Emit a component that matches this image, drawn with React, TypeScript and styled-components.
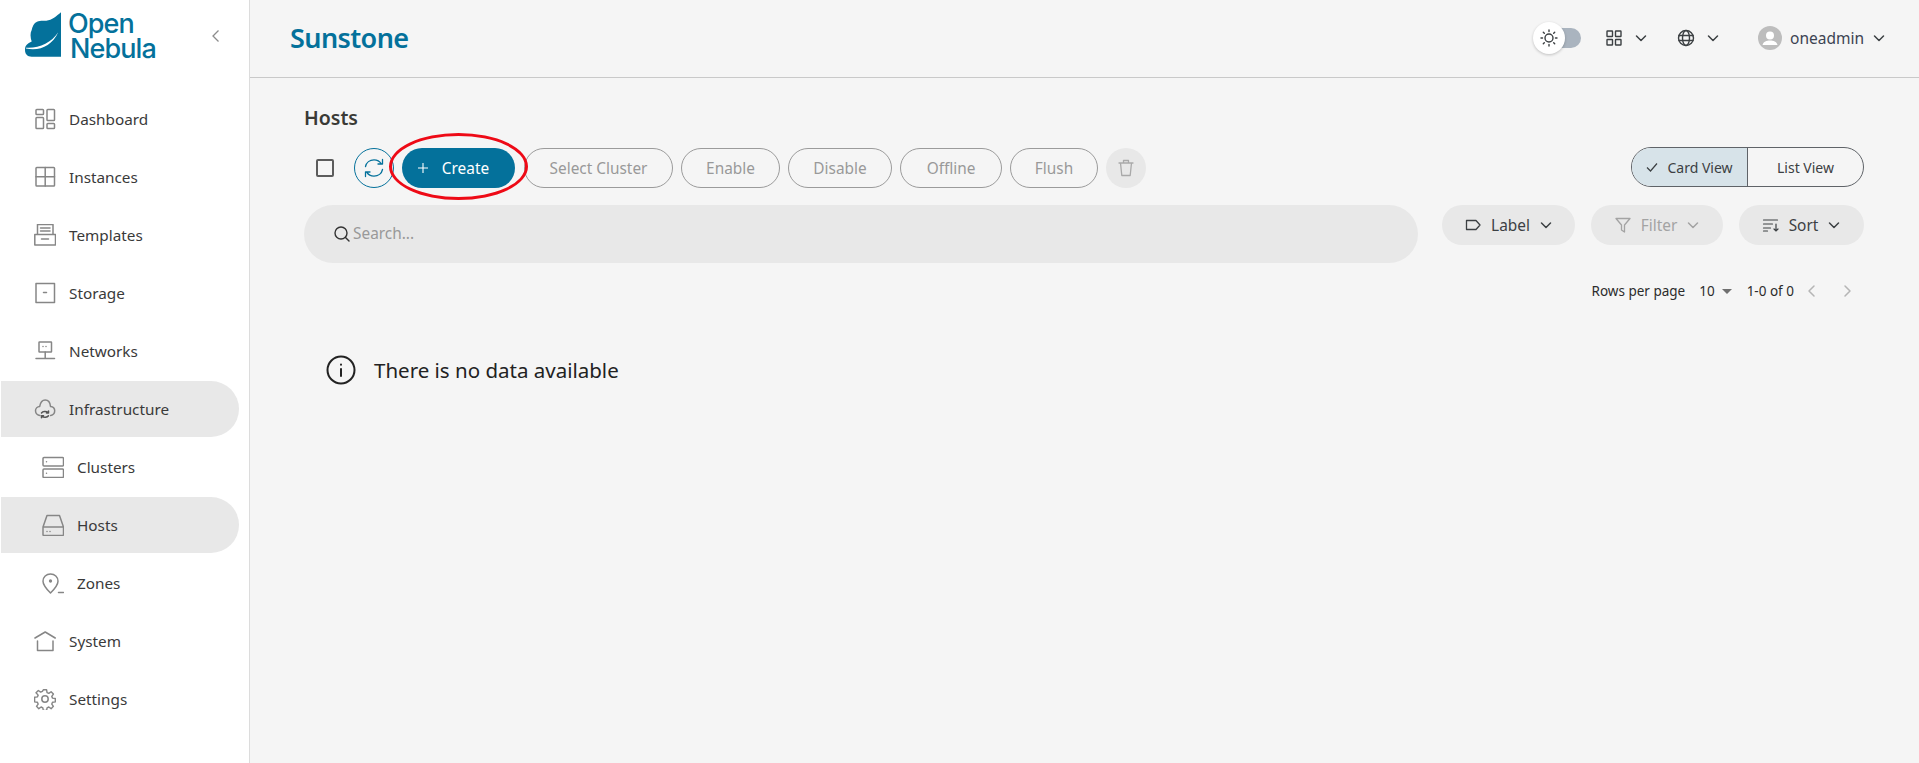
import React from "react";
import styled, { createGlobalStyle } from "styled-components";

const Global = createGlobalStyle`
  html, body { margin: 0; padding: 0; height: 100%; background: #f5f5f5; overflow: hidden; }
  #root { height: 100%; }
  * { box-sizing: border-box; }
  body { font-family: "Noto Sans", "Open Sans", sans-serif; color: #2c2c2c; }
`;

const Shell = styled.div`display: flex; height: 763px; width: 1919px;`;
const Sidebar = styled.aside`
  width: 250px; flex: none; background: #fff; border-right: 1px solid #dcdcdc;
  display: flex; flex-direction: column;
`;
const Brand = styled.div`
  height: 91px; flex: none; display: flex; align-items: flex-start; padding: 12px 0 0 25px; position: relative;
`;
const LogoWord = styled.div`
  margin: -1px 0 0 6px; font-family: "Inter", sans-serif; font-weight: 500; color: #04719b;
  font-size: 27px; line-height: 25px; letter-spacing: -0.9px;
`;
const LogoLine = styled.div<{ $indent?: number }>`padding-left: ${p => p.$indent ?? 0}px;`;
const Collapse = styled.button`
  border: 0; background: none; padding: 0; color: #8c8c8c; display: flex; margin: 17px 28px 0 auto;
`;
const Nav = styled.nav`display: flex; flex-direction: column; gap: 2px; padding: 0 10px 0 1px;`;
const NavItem = styled.a<{ $active?: boolean; $nested?: boolean }>`
  height: 56px; display: flex; align-items: center; gap: 13px;
  padding: 0 0 1px ${p => (p.$nested ? 41 : 33)}px;
  background: ${p => (p.$active ? "#e8e8e8" : "transparent")};
  border-radius: 0 28px 28px 0; font-size: 15.3px; color: #3a3a3a;
`;
const NavIcon = styled.svg`
  width: 22px; height: 22px; flex: none; fill: none; stroke: #868686; stroke-width: 1.5;
  stroke-linecap: round; stroke-linejoin: round;
`;

const Main = styled.main`flex: 1; min-width: 0; display: flex; flex-direction: column;`;
const Header = styled.header`
  height: 78px; flex: none; border-bottom: 1px solid #c9c9c9; display: flex; align-items: center;
  padding: 0 33px 2px 40px;
`;
const AppTitle = styled.h1`
  margin: 0; font-size: 27px; font-weight: 600; color: #04719b; letter-spacing: -0.6px;
`;
const HeaderTools = styled.div`margin-left: auto; display: flex; align-items: center;`;
const ToggleWrap = styled.div`position: relative; width: 48px; height: 20px; margin-right: 23px; display: flex; justify-content: flex-end;`;
const ToggleTrack = styled.div`width: 36px; height: 20px; border-radius: 10px; background: #aab4bf;`;
const ToggleThumb = styled.div`
  position: absolute; left: 0; top: -6px; width: 32px; height: 32px; border-radius: 50%; background: #fff;
  box-shadow: 0 1px 3px rgba(0,0,0,.22); display: flex; align-items: center; justify-content: center;
`;
const HeaderIcon = styled.svg`
  width: 20px; height: 20px; fill: none; stroke: #3c4043; stroke-width: 1.4; stroke-linecap: round; stroke-linejoin: round; flex: none;
`;
const HeaderGroup = styled.div<{ $gap: number; $after: number }>`
  display: flex; align-items: center; gap: ${p => p.$gap}px; margin-right: ${p => p.$after}px;
`;
const Chevron = styled.svg<{ $color?: string }>`
  width: 14px; height: 14px; fill: none; stroke: ${p => p.$color ?? "#3c4043"}; stroke-width: 1.5;
  stroke-linecap: round; stroke-linejoin: round; flex: none;
`;
const Avatar = styled.div`
  width: 24px; height: 24px; border-radius: 50%; background: #bdbdbd; display: flex; align-items: center; justify-content: center; overflow: hidden;
`;
const UserName = styled.span`font-size: 15.5px; color: #3c4352; width: 71px; margin-left: -2px; margin-right: 1px;`;

const Content = styled.div`flex: 1; padding: 27px 55px 0 54px; display: flex; flex-direction: column;`;
const PageTitle = styled.h2`margin: 0; font-size: 19.5px; line-height: 26px; font-weight: 600; color: #3a3a36; height: 43px;`;
const ActionRow = styled.div`display: flex; align-items: flex-start; height: 57px;`;
const CheckCell = styled.div`
  width: 18px; height: 18px; border: 2px solid #5c5c5c; border-radius: 2px; margin: 11px 20px 0 12px; flex: none;
`;
const Actions = styled.div`display: flex; gap: 8px; align-items: center;`;
const RefreshBtn = styled.button`
  width: 40px; height: 40px; border-radius: 50%; border: 1px solid #04719b; background: none; padding: 0;
  display: flex; align-items: center; justify-content: center;
`;
const CreateWrap = styled.div`position: relative; display: flex; margin-right: 1px;`;
const CreateBtn = styled.button`
  width: 113px; height: 40px; border-radius: 20px; border: 0; background: #04719b; color: #fff; font: inherit; font-size: 15.4px;
  display: flex; align-items: center; justify-content: center; gap: 13px; padding: 0 11px 0 0;
`;
const RedEllipse = styled.span`
  position: absolute; left: -13px; right: -13px; top: -15px; bottom: -12px; border: 3.5px solid #ee0a16; border-radius: 50%; pointer-events: none;
`;
const GhostBtn = styled.button<{ $w: number }>`
  width: ${p => p.$w}px; height: 40px; border-radius: 20px; border: 1px solid #9b9b9b; background: none; font: inherit; font-size: 15.4px;
  color: #999; padding: 0; white-space: nowrap;
`;
const TrashBtn = styled.button`
  width: 40px; height: 40px; border-radius: 50%; border: 0; background: #e8e8e8; padding: 0; display: flex; align-items: center; justify-content: center;
`;
const ViewSwitch = styled.div`
  margin-left: auto; margin-top: -1px; display: flex; width: 233px; height: 40px; border: 1px solid #5f6368; border-radius: 20px; overflow: hidden;
`;
const ViewOption = styled.div<{ $on?: boolean }>`
  flex: ${p => (p.$on ? "0 0 116px" : "1")}; display: flex; align-items: center; justify-content: center; gap: 9px;
  font-size: 14px; color: #3c4043; background: ${p => (p.$on ? "#d7e3e9" : "transparent")};
  border-right: ${p => (p.$on ? "1px solid #5f6368" : "0")};
`;
const FilterRow = styled.div`display: flex; align-items: flex-start; gap: 16px;`;
const SearchBox = styled.div`
  width: 1114px; height: 58px; border-radius: 29px; background: #e8e8e8; margin-right: 8px; display: flex; align-items: center; gap: 1px;
  padding: 0 0 1px 28px; font-size: 15.4px; color: #999; flex: none;
`;
const FilterBtn = styled.button<{ $w: number; $off?: boolean }>`
  width: ${p => p.$w}px; height: 40px; border-radius: 20px; border: 0; background: #e8e8e8; padding: 0; flex: none;
  display: flex; align-items: center; justify-content: center; gap: 9px; font: inherit; font-size: 15.4px;
  color: ${p => (p.$off ? "#a3a3a3" : "#3c4043")};
`;
const Pager = styled.div`
  display: flex; align-items: center; justify-content: flex-end; height: 20px; margin-top: 18px; padding-right: 10px; font-size: 13.5px; color: #2c2c2c;
`;
const PagerSize = styled.span`margin-left: 14px;`;
const Caret = styled.span`
  width: 0; height: 0; border: 5px solid transparent; border-top: 5px solid #6f6f6f; border-bottom: 0; margin: 0 15px 0 7px;
`;
const PagerNav = styled.span`display: flex; gap: 21px; margin-left: 11px;`;
const EmptyNote = styled.div`
  display: flex; align-items: center; gap: 18px; margin-top: 51px; padding-left: 22px; font-size: 20.5px; color: #222; height: 36px;
`;

const I = ({ children }: { children: React.ReactNode }) => <NavIcon viewBox="0 0 22 22">{children}</NavIcon>;
const navIcons: Record<string, React.ReactNode> = {
  Dashboard: <><rect x="2" y="1.500" width="7.500" height="5" rx=".8"/><rect x="2" y="9.500" width="7.500" height="11" rx=".8"/><rect x="13" y="1.500" width="7.500" height="11" rx=".8"/><rect x="13" y="15.500" width="7.500" height="5" rx=".8"/></>,
  Instances: <><rect x="2" y="1.500" width="18.500" height="18.500" rx=".8"/><path d="M11.200 1.500v18.500M2 10.700h18.500"/></>,
  Templates: <><path d="M3.500 10V.5h15.500V10M.8 10.500h20.700v10.500H.8zM6.500 4h9.500M6.500 7h9.500M7.500 15h7"/></>,
  Storage: <><path d="M2 1.500h18.500M2 1.500V20.500h18.500V1.500M9.500 10.500h3"/></>,
  Networks: <><rect x="5" y="2" width="12.500" height="10" rx=".5"/><path d="M11.200 12V18.500M2 18.500h18.500M9 6.500h.01M12 6.500h.01"/></>,
  Infrastructure: <><path d="M6 17.500c-2.500-.2-4.500-2.200-4.500-4.700 0-2.400 1.900-4.300 4.200-4.400C6.300 5 8.200 2 11.200 2c3.200 0 5 3 5.300 6.400 2.300.2 4.200 2 4.200 4.400 0 2.300-1.500 4.200-4 4.700"/><path d="M7.500 15c1.200-1.500 4.500-2.200 6.500-.3M14.500 13v2h-2M14.500 17.800c-1.200 1.500-4.500 2.200-6.500.3M7.500 19.800v-2h2" strokeWidth="1.500" stroke="#555"/></>,
  Clusters: <><rect x="1" y="1.500" width="20.500" height="8.500" rx="1"/><rect x="1" y="13" width="20.500" height="8.500" rx="1"/><path d="M4.500 5.700h.01M4.500 17.200h.01"/></>,
  Hosts: <><path d="M1 13 5 1.500h12.500l4 11.500M1 13h20.500v7.500a1 1 0 0 1-1 1H2a1 1 0 0 1-1-1zM5 17.500h.01M8 17.500h.01"/></>,
  Zones: <><path d="M8.500 21C5 17.500 1 13.500 1 9.200 1 5 4.300 2 8.500 2S16 5 16 9.200c0 4.300-4 8.300-7.500 11.800z"/><circle cx="8.500" cy="9" r=".9" fill="#868686"/><path d="M16.500 20.500h5"/></>,
  System: <><path d="M1 8 11.200 2l10 6M3.500 11v9.500h15.500V11"/></>,
  Settings: <><circle cx="11" cy="11" r="3.200"/><path d="M9.300 1.500h3.400l.5 2.900 1.800.8 2.400-1.700 2.400 2.400-1.700 2.400.8 1.800 2.900.5v3.400l-2.900.5-.8 1.800 1.700 2.400-2.400 2.400-2.400-1.700-1.800.8-.5 2.900H9.300l-.5-2.900-1.800-.8-2.400 1.700-2.400-2.400 1.700-2.400-.8-1.800-2.900-.5V9.300l2.900-.5.8-1.800L1.700 4.600l2.400-2.400L6.500 3.900l1.800-.8z" transform="translate(.4 .4) scale(.96)"/></>,
};
const navItems: { label: string; active?: boolean; nested?: boolean }[] = [
  { label: "Dashboard" }, { label: "Instances" }, { label: "Templates" }, { label: "Storage" }, { label: "Networks" },
  { label: "Infrastructure", active: true }, { label: "Clusters", nested: true }, { label: "Hosts", nested: true, active: true },
  { label: "Zones", nested: true }, { label: "System" }, { label: "Settings" },
];
const Down = ({ color }: { color?: string }) => <Chevron $color={color} viewBox="0 0 14 14"><path d="M2.500 5l4.500 4.500L11.500 5"/></Chevron>;

export default function App() {
  return (
    <Shell>
      <Global />
      <Sidebar>
        <Brand>
          <svg width="37" height="46" viewBox="0 0 37 46" style={{ flex: "none" }}>
            <path fill="#04719b" d="M36 .3V44.700H6.700C2.500 44.700 0 42 0 38c0-2.200.4-3.800 1.500-5 1.300-1.500 3.300-2.700 5.200-3.600C5.300 25.500 5 21 6.700 18c.6-3.500 2.300-7 5.300-8.300 3-1.400 6.300-.8 9.300-1C27 8.200 31.500 4 36 .3z"/>
            <path fill="#fff" d="M1 35.700c13 .8 25-4.500 32.300-15.400-6.500 13.500-18 19-32.300 16.300z"/>
          </svg>
          <LogoWord>
            <LogoLine>Open</LogoLine>
            <LogoLine $indent={2}>Nebula</LogoLine>
          </LogoWord>
          <Collapse aria-label="collapse">
            <svg width="10" height="14" viewBox="0 0 10 14" fill="none" stroke="currentColor" strokeWidth="1.300"><path d="M7.500 1.500 2 7l5.500 5.500"/></svg>
          </Collapse>
        </Brand>
        <Nav>
          {navItems.map(n => (
            <NavItem key={n.label} $active={n.active} $nested={n.nested}>
              <I>{navIcons[n.label]}</I>
              {n.label}
            </NavItem>
          ))}
        </Nav>
      </Sidebar>
      <Main>
        <Header>
          <AppTitle>Sunstone</AppTitle>
          <HeaderTools>
            <ToggleWrap>
              <ToggleTrack />
              <ToggleThumb>
                <HeaderIcon viewBox="0 0 20 20">
                  <circle cx="10" cy="10" r="4"/>
                  <path d="M10 2v1.500M10 16.500V18M2 10h1.500M16.500 10H18M4.300 4.300l1 1M14.700 14.700l1 1M4.300 15.700l1-1M14.700 5.300l1-1"/>
                </HeaderIcon>
              </ToggleThumb>
            </ToggleWrap>
            <HeaderGroup $gap={10} $after={28}>
              <HeaderIcon viewBox="0 0 20 20">
                <rect x="3" y="3" width="5.500" height="5.500" rx=".5"/><rect x="11.500" y="3" width="5.500" height="5.500" rx=".5"/>
                <rect x="3" y="11.500" width="5.500" height="5.500" rx=".5"/><rect x="11.500" y="11.500" width="5.500" height="5.500" rx=".5"/>
              </HeaderIcon>
              <Down />
            </HeaderGroup>
            <HeaderGroup $gap={10} $after={38}>
              <HeaderIcon viewBox="0 0 20 20">
                <circle cx="10" cy="10" r="7.500"/><ellipse cx="10" cy="10" rx="3.500" ry="7.500"/><path d="M3 7.500h14M3 12.500h14"/>
              </HeaderIcon>
              <Down />
            </HeaderGroup>
            <HeaderGroup $gap={10} $after={0}>
              <Avatar>
                <svg width="24" height="24" viewBox="0 0 24 24" fill="#fff"><circle cx="12" cy="9.500" r="4"/><path d="M4.500 19c1-3.500 4-4.500 7.500-4.500s6.500 1 7.500 4.500z"/></svg>
              </Avatar>
              <UserName>oneadmin</UserName>
              <Down />
            </HeaderGroup>
          </HeaderTools>
        </Header>
        <Content>
          <PageTitle>Hosts</PageTitle>
          <ActionRow>
            <CheckCell />
            <Actions>
              <RefreshBtn aria-label="refresh">
                <svg width="22" height="22" viewBox="0 0 22 22" fill="none" stroke="#04719b" strokeWidth="1.300" strokeLinecap="round" strokeLinejoin="round">
                  <path d="M2.500 9.500C3.300 5.500 6.800 2.800 11 2.800c3.200 0 5.800 1.500 7.300 4M19.500 2.500v4.500H15"/>
                  <path d="M19.500 12.500c-.8 4-4.300 6.700-8.500 6.700-3.200 0-5.800-1.500-7.300-4M2.500 19.500V15H7"/>
                </svg>
              </RefreshBtn>
              <CreateWrap>
                <CreateBtn>
                  <svg width="12" height="12" viewBox="0 0 12 12" stroke="#fff" strokeWidth="1.100"><path d="M6 1v10M1 6h10"/></svg>
                  Create
                </CreateBtn>
                <RedEllipse />
              </CreateWrap>
              <GhostBtn $w={149}>Select Cluster</GhostBtn>
              <GhostBtn $w={99}>Enable</GhostBtn>
              <GhostBtn $w={104}>Disable</GhostBtn>
              <GhostBtn $w={102}>Offline</GhostBtn>
              <GhostBtn $w={88}>Flush</GhostBtn>
              <TrashBtn aria-label="delete">
                <svg width="20" height="20" viewBox="0 0 20 20" fill="none" stroke="#a9a9a9" strokeWidth="1.300" strokeLinecap="round" strokeLinejoin="round">
                  <path d="M3 5h14M4.500 5l1.300 12.500h8.400L15.500 5M7.500 5V2.500h5V5"/>
                </svg>
              </TrashBtn>
            </Actions>
            <ViewSwitch>
              <ViewOption $on>
                <svg width="12" height="12" viewBox="0 0 12 12" fill="none" stroke="#3c4043" strokeWidth="1.200"><path d="M1 6.500 4.500 10 11 2.500"/></svg>
                Card View
              </ViewOption>
              <ViewOption>List View</ViewOption>
            </ViewSwitch>
          </ActionRow>
          <FilterRow>
            <SearchBox>
              <svg width="20" height="20" viewBox="0 0 20 20" fill="none" stroke="#333" strokeWidth="1.400" strokeLinecap="round"><circle cx="9" cy="9" r="6"/><path d="M13.500 13.500 17 17"/></svg>
              Search...
            </SearchBox>
            <FilterBtn $w={133}>
              <svg width="18" height="18" viewBox="0 0 18 18" fill="none" stroke="#3c4043" strokeWidth="1.300" strokeLinejoin="round"><path d="M2.500 4.500h9.500l4 4.500-4 4.500H2.500z"/></svg>
              Label
              <Down />
            </FilterBtn>
            <FilterBtn $w={132} $off>
              <svg width="18" height="18" viewBox="0 0 18 18" fill="none" stroke="#a3a3a3" strokeWidth="1.300" strokeLinejoin="round"><path d="M2 2.500h14l-5.500 6.500v7l-3-2V9z"/></svg>
              Filter
              <Down color="#a3a3a3" />
            </FilterBtn>
            <FilterBtn $w={125}>
              <svg width="18" height="18" viewBox="0 0 18 18" fill="none" stroke="#3c4043" strokeWidth="1.200" strokeLinecap="round"><path d="M1.500 4h14M1.500 8h9M1.500 12h7M1.500 15h4M14 8v7M12 13l2 2 2-2"/></svg>
              Sort
              <Down />
            </FilterBtn>
          </FilterRow>
          <Pager>
            Rows per page
            <PagerSize>10</PagerSize>
            <Caret />
            1-0 of 0
            <PagerNav>
              <Chevron $color="#b5b5b5" viewBox="0 0 14 14"><path d="M9 2 4 7l5 5"/></Chevron>
              <Chevron $color="#b5b5b5" viewBox="0 0 14 14"><path d="M5 2l5 5-5 5"/></Chevron>
            </PagerNav>
          </Pager>
          <EmptyNote>
            <svg width="30" height="30" viewBox="0 0 30 30" fill="none" stroke="#222" strokeWidth="2" strokeLinecap="round" style={{ flex: "none" }}>
              <circle cx="15" cy="15" r="13.500"/><path d="M15 14v7M15 9.500v.2"/>
            </svg>
            There is no data available
          </EmptyNote>
        </Content>
      </Main>
    </Shell>
  );
}
